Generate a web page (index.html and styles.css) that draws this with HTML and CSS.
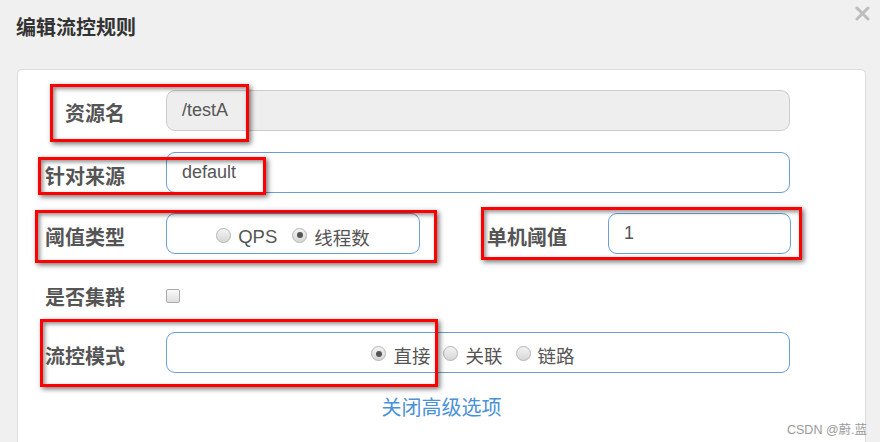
FILE: index.html
```html
<!DOCTYPE html>
<html lang="zh-CN">
<head>
<meta charset="utf-8">
<title>编辑流控规则</title>
<link rel="stylesheet" href="styles.css">
</head>
<body>
<div class="page">
  <header class="modal-header">
    <h3 class="title">编辑流控规则</h3>
    <button class="close" type="button" aria-label="close">
      <svg width="15" height="15" viewBox="0 0 15 15"><path d="M2 2 L13 13 M13 2 L2 13" stroke="#bdbdbd" stroke-width="3" stroke-linecap="round"/></svg>
    </button>
  </header>
  <div class="card">
    <form class="form">
      <div class="row r1">
        <label class="lbl">资源名</label>
        <div class="ctl ctl-wide disabled">/testA</div>
      </div>
      <div class="row r2">
        <label class="lbl">针对来源</label>
        <div class="ctl ctl-wide focus">default</div>
      </div>
      <div class="row r3">
        <label class="lbl">阈值类型</label>
        <div class="ctl ctl-radio focus">
          <span class="opt"><span class="radio"></span>QPS</span>
          <span class="opt"><span class="radio checked"></span>线程数</span>
        </div>
        <label class="lbl lbl2">单机阈值</label>
        <div class="ctl ctl-small focus">1</div>
      </div>
      <div class="row r4">
        <label class="lbl">是否集群</label>
        <span class="checkbox"></span>
      </div>
      <div class="row r5">
        <label class="lbl">流控模式</label>
        <div class="ctl ctl-wide ctl-radio2 focus">
          <span class="opt"><span class="radio checked"></span>直接</span>
          <span class="opt"><span class="radio"></span>关联</span>
          <span class="opt"><span class="radio"></span>链路</span>
        </div>
      </div>
      <div class="link-row"><a class="link">关闭高级选项</a></div>
    </form>
  </div>
  <div class="mark m1"></div>
  <div class="mark m2"></div>
  <div class="mark m3"></div>
  <div class="mark m4"></div>
  <div class="mark m5"></div>
  <div class="watermark">CSDN @蔚.蓝</div>
</div>
</body>
</html>
```
FILE: styles.css
```css
body {
  margin: 0;
  background: #f0f0f0;
  font-family: "Liberation Sans", "Noto Sans CJK SC", sans-serif;
}
.page {
  position: relative;
  width: 880px;
  height: 442px;
  overflow: hidden;
}
.modal-header {
  display: flex;
  justify-content: space-between;
  align-items: flex-start;
  height: 69px;
  padding: 0 10px 0 16px;
  box-sizing: border-box;
}
.title {
  margin: 14px 0 0;
  font-size: 20px;
  line-height: 28px;
  font-weight: bold;
  color: #333;
}
.close {
  margin-top: 6px;
  border: 0;
  background: none;
  padding: 0;
  width: 15px;
  height: 15px;
  line-height: 0;
}
.card {
  margin-left: 17px;
  width: 849px;
  height: 400px;
  box-sizing: border-box;
  background: #fff;
  border: 1px solid #dcdcdc;
  border-radius: 5px;
  padding-top: 20px;
}
.row {
  display: flex;
  align-items: center;
  height: 41px;
}
.r1 { margin-bottom: 21px; }
.r2 { margin-bottom: 20px; }
.r3 { margin-bottom: 21px; }
.r4 { margin-bottom: 16px; }
.lbl {
  width: 107px;
  margin-right: 41px;
  padding-top: 5px;
  text-align: right;
  font-size: 20px;
  font-weight: bold;
  color: #555;
  flex: none;
}
.r1 .lbl { padding-top: 3px; }
.r4 .lbl { padding-top: 1px; }
.lbl2 { width: 147px; }
.ctl {
  height: 41px;
  box-sizing: border-box;
  border: 1px solid #ccc;
  border-radius: 9px;
  padding-left: 15px;
  display: flex;
  align-items: center;
  font-size: 18px;
  color: #555;
  flex: none;
}
.ctl.focus { border-color: #6a9fd6; }
.ctl.disabled { background: #eee; }
.ctl-wide { width: 624px; }
.ctl-small { width: 183px; }
.ctl-radio {
  width: 254px;
  padding-left: 0;
  padding-top: 6px;
  justify-content: center;
  gap: 15px;
}
.ctl-radio2 {
  padding-left: 0;
  padding-right: 10px;
  padding-top: 5px;
  justify-content: center;
  gap: 13px;
}
.opt {
  display: flex;
  align-items: center;
  gap: 7px;
  font-size: 18.5px;
}
.radio {
  width: 13px;
  height: 13px;
  border: 1px solid #b4b4b4;
  border-radius: 50%;
  background: linear-gradient(#f4f4f4, #d6d6d6);
  display: flex;
  align-items: center;
  justify-content: center;
  margin-top: -3px;
}
.radio.checked::after {
  content: "";
  width: 6px;
  height: 6px;
  border-radius: 50%;
  background: #555;
}
.checkbox {
  width: 12px;
  height: 12px;
  border: 1px solid #aaa;
  border-radius: 2px;
  background: linear-gradient(#fafafa, #dedede);
}
.link-row {
  margin-top: 21px;
  text-align: center;
  line-height: 28px;
}
.link {
  font-size: 20px;
  color: #4a92d8;
  cursor: pointer;
}
.mark {
  position: absolute;
  box-sizing: border-box;
  border: 3px solid #ff0000;
  box-shadow: 2px 2px 5px rgba(0, 0, 0, 0.55), inset 2px 2px 4px rgba(0, 0, 0, 0.45);
}
.m1 { left: 50px; top: 84px; width: 199px; height: 58px; }
.m2 { left: 38px; top: 157px; width: 228px; height: 38px; }
.m3 { left: 35px; top: 210px; width: 402px; height: 53px; }
.m4 { left: 481px; top: 207px; width: 321px; height: 53px; }
.m5 { left: 40px; top: 319px; width: 398px; height: 68px; }
.watermark {
  position: absolute;
  left: 787px;
  top: 419px;
  font-size: 12.5px;
  color: #999;
}
```
